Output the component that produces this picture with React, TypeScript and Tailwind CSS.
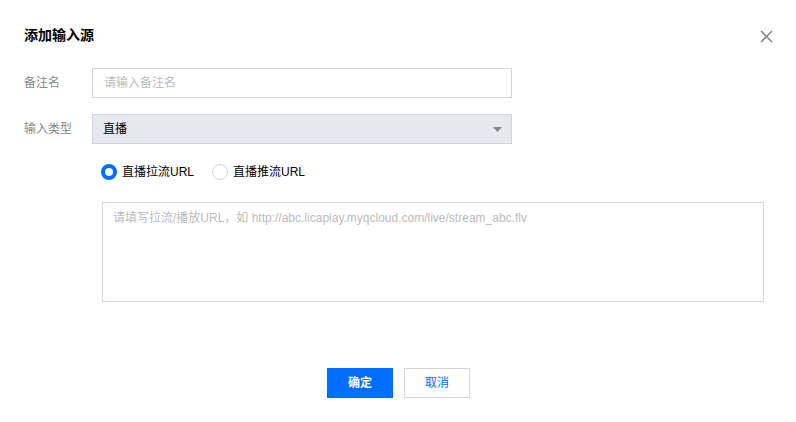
import React from 'react';

export default function App() {
  return (
    <div className="w-[796px] h-[422px] bg-white relative text-[12px] text-[#000] font-['Liberation_Sans','Noto_Sans_CJK_SC',sans-serif]">
      <div className="flex items-center justify-between pl-6 pr-[22px] pt-[24px] h-[46px]">
        <h2 className="text-[14px] font-bold text-[#000] leading-[16px]">添加输入源</h2>
        <button className="w-4 h-4 flex items-center justify-center mt-[3px]">
          <svg width="13" height="13" viewBox="0 0 13 13">
            <path d="M1 1 L12 12 M12 1 L1 12" stroke="#888" strokeWidth="1.6" />
          </svg>
        </button>
      </div>

      <div className="pl-6 pt-[22px]">
        <div className="flex items-center h-[30px]">
          <label className="w-[68px] text-[#888]">备注名</label>
          <input
            className="w-[420px] h-[30px] border border-[#cfd5de] px-[11px] outline-none placeholder:text-[#bbb]"
            placeholder="请输入备注名"
          />
        </div>

        <div className="flex items-center h-[30px] mt-[16px]">
          <label className="w-[68px] text-[#888]">输入类型</label>
          <div className="w-[420px] h-[30px] border border-[#cfd5de] bg-[#e5e8ed] pl-[10px] pr-[9px] flex items-center justify-between">
            <span className="text-[#000]">直播</span>
            <svg width="9" height="5" viewBox="0 0 9 5">
              <path d="M0 0 H9 L4.5 5 Z" fill="#888" />
            </svg>
          </div>
        </div>

        <div className="flex items-center h-[16px] mt-[20px] ml-[77px] gap-[18px]">
          <label className="flex items-center gap-[5px]">
            <span className="w-4 h-4 rounded-full border-[4px] border-[#006eff] bg-white" />
            <span>直播拉流URL</span>
          </label>
          <label className="flex items-center gap-[5px]">
            <span className="w-4 h-4 rounded-full border border-[#cfd5de] bg-white" />
            <span>直播推流URL</span>
          </label>
        </div>

        <textarea
          className="block mt-[22px] ml-[78px] w-[662px] h-[100px] border border-[#cfd5de] px-[10px] py-[6px] resize-none outline-none placeholder:text-[#bbb]"
          placeholder="请填写拉流/播放URL，如 http://abc.licaplay.myqcloud.com/live/stream_abc.flv"
        />
      </div>

      <div className="flex justify-center gap-[11px] mt-[66px] pl-[1px]">
        <button className="w-[66px] h-[30px] bg-[#006eff] text-white font-bold">确定</button>
        <button className="w-[66px] h-[30px] border border-[#cfd5de] bg-white text-[#006eff]">取消</button>
      </div>
    </div>
  );
}
